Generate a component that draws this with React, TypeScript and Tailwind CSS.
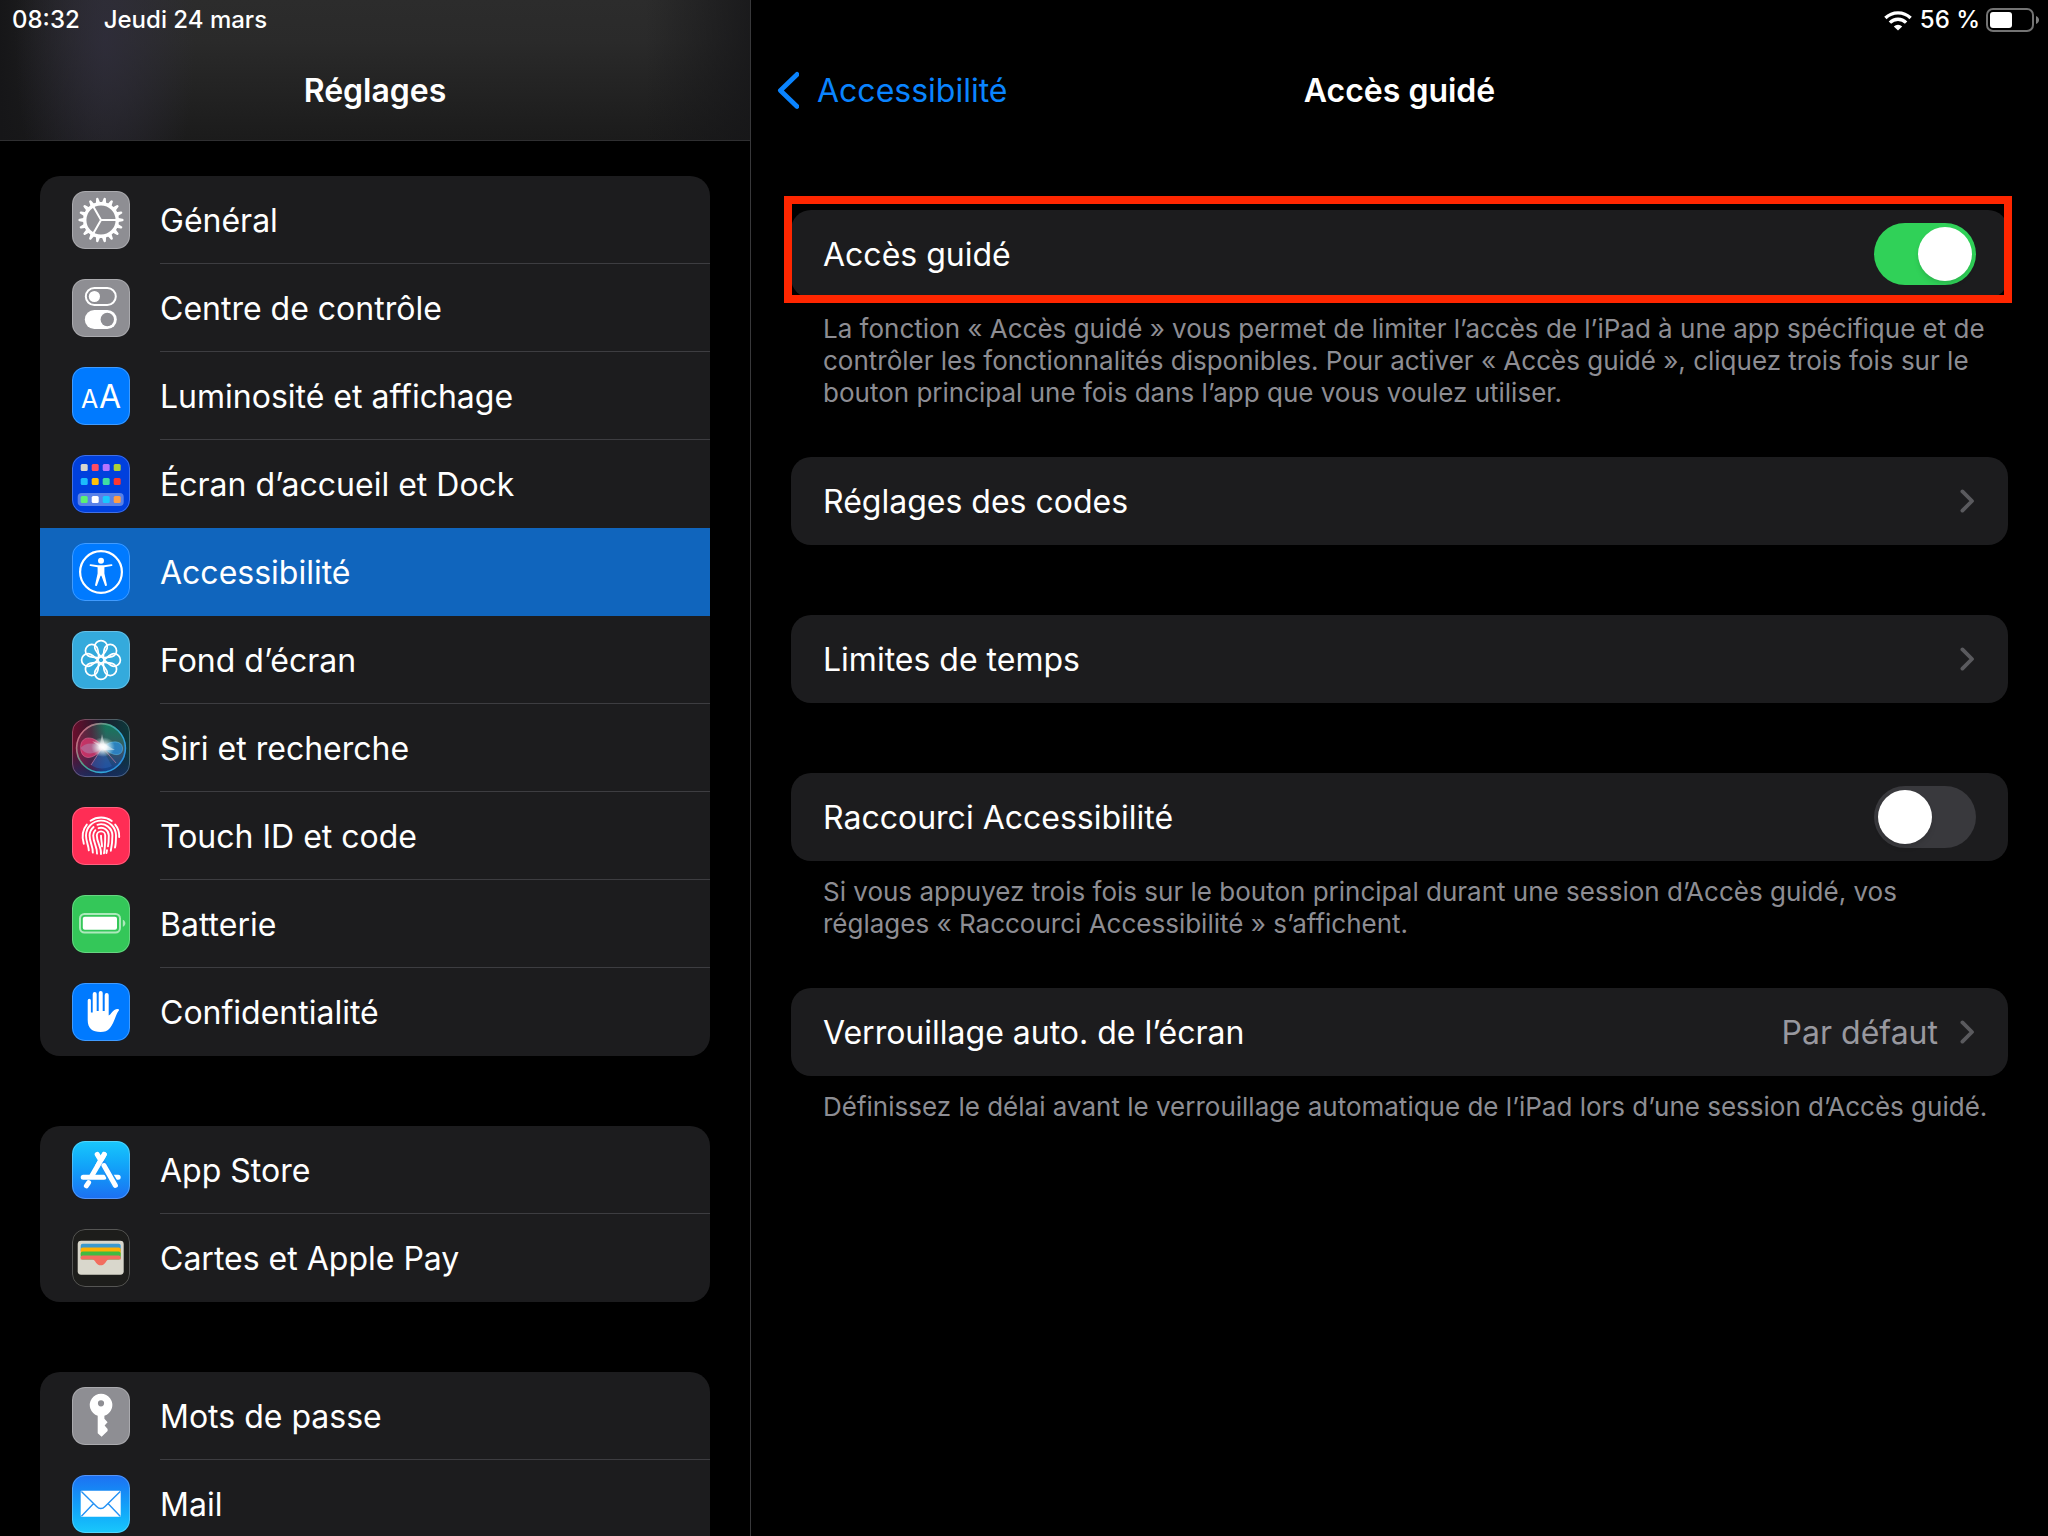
import { useState } from "react";
import type { ReactNode } from "react";

type SidebarItem = {
  label: string;
  icon: ReactNode;
  bg: string;
};

const teeth = Array.from({ length: 18 }, (_, i) => i * 20);
const petals = Array.from({ length: 8 }, (_, i) => i * 45);

const homeApps = [
  ["#d8d6cf", "#ff4d61", "#b574ff", "#acd136"],
  ["#1cbcfc", "#ffc107", "#3fdca3", "#ff3730"],
  ["#5bf173", "#ffffff", "#19c8ff", "#ff9d45"],
];
const homeRows = [9, 23, 41];

function Svg({ children }: { children: ReactNode }) {
  return (
    <svg viewBox="0 0 58 58" className="size-full" aria-hidden="true">
      {children}
    </svg>
  );
}

function GearIcon() {
  return (
    <Svg>
      <g fill="none" stroke="#fff">
        <circle cx="29" cy="29" r="16.3" strokeWidth="3.4" />
        <path
          d="M29 29H45M29 29L21 15.1M29 29L21 42.9"
          strokeWidth="2"
        />
      </g>
      {teeth.map((angle) => (
        <path
          key={angle}
          d="M45.5 26.7L50.4 27.8A1.2 1.2 0 0 1 50.4 30.2L45.5 31.3Z"
          fill="#fff"
          transform={`rotate(${angle} 29 29)`}
        />
      ))}
    </Svg>
  );
}

function ControlIcon() {
  return (
    <Svg>
      <rect x="13.8" y="9" width="30" height="17" rx="8.5" fill="none" stroke="#fff" strokeWidth="2" />
      <circle cx="22.4" cy="17.5" r="5.6" fill="#fff" />
      <rect x="12.8" y="31" width="32" height="19" rx="9.5" fill="#fff" />
      <circle cx="35.3" cy="40.5" r="6.7" fill="#8e8e93" />
    </Svg>
  );
}

function TextSizeIcon() {
  return (
    <Svg>
      <g fill="#fff" fontFamily="Inter, sans-serif" textAnchor="middle">
        <text x="17.5" y="41" fontSize="25">A</text>
        <text x="38" y="41" fontSize="32">A</text>
      </g>
    </Svg>
  );
}

function HomeIcon() {
  return (
    <Svg>
      <rect x="5.7" y="38" width="46" height="13" rx="4" fill="#fff" opacity="0.35" />
      {homeApps.map((row, r) =>
        row.map((color, c) => (
          <rect key={color} x={8.7 + c * 11} y={homeRows[r]} width="7" height="7" rx="1.5" fill={color} />
        ))
      )}
    </Svg>
  );
}

function AccessibilityIcon() {
  return (
    <Svg>
      <circle cx="29" cy="29" r="20.9" fill="none" stroke="#fff" strokeWidth="2.2" />
      <circle cx="29" cy="17.7" r="3" fill="#fff" />
      <path
        d="M18.6 21.2L26 22.2H32L39.4 21.2A.9.9 0 0 1 39.6 23L32.4 24.3V30.5L34.9 41.8A1 1 0 0 1 33 42.4L29.4 32.8H28.6L25 42.4A1 1 0 0 1 23.1 41.8L25.6 30.5V24.3L18.4 23A.9.9 0 0 1 18.6 21.2Z"
        fill="#fff"
      />
    </Svg>
  );
}

function WallpaperIcon() {
  return (
    <Svg>
      <g fill="none" stroke="#fff" strokeWidth="1.7">
        <circle cx="29" cy="29" r="3.2" />
        {petals.map((angle) => (
          <path
            key={angle}
            d="M29 25.8C26 22 22.7 19.6 22.7 15.9A6.3 6.3 0 0 1 35.3 15.9C35.3 19.6 32 22 29 25.8Z"
            transform={`rotate(${angle} 29 29)`}
          />
        ))}
      </g>
    </Svg>
  );
}

function SiriIcon() {
  return (
    <Svg>
      <defs>
        <linearGradient id="siri-bg" x1="0" y1="0" x2="1" y2="0">
          <stop offset="0" stopColor="#6e0d2c" />
          <stop offset="0.5" stopColor="#1d1c2c" />
          <stop offset="1" stopColor="#0b3a3c" />
        </linearGradient>
        <linearGradient id="siri-base" x1="0" y1="0" x2="0" y2="1">
          <stop offset="0.5" stopColor="#12264d" stopOpacity="0" />
          <stop offset="1" stopColor="#17306a" stopOpacity="0.8" />
        </linearGradient>
        <linearGradient id="siri-ring" x1="0" y1="0.2" x2="1" y2="0.8">
          <stop offset="0" stopColor="#e0607f" />
          <stop offset="0.4" stopColor="#4aa58a" />
          <stop offset="0.7" stopColor="#31a9d8" />
          <stop offset="1" stopColor="#2a8ae0" />
        </linearGradient>
        <linearGradient id="siri-orb" x1="0.6" y1="0" x2="0.5" y2="1">
          <stop offset="0" stopColor="#127a5c" />
          <stop offset="0.5" stopColor="#3d5563" />
          <stop offset="1" stopColor="#0d3f92" />
        </linearGradient>
        <linearGradient id="siri-left" x1="0" y1="0" x2="1" y2="0">
          <stop offset="0" stopColor="#8a1740" stopOpacity="0.9" />
          <stop offset="0.3" stopColor="#5a1233" stopOpacity="0.7" />
          <stop offset="0.6" stopColor="#5a1233" stopOpacity="0" />
        </linearGradient>
        <radialGradient id="siri-glow">
          <stop offset="0" stopColor="#fff" />
          <stop offset="0.3" stopColor="#fff" stopOpacity="0.9" />
          <stop offset="1" stopColor="#bff3ea" stopOpacity="0" />
        </radialGradient>
      </defs>
      <rect width="58" height="58" fill="url(#siri-bg)" />
      <rect width="58" height="58" fill="url(#siri-base)" />
      <circle cx="29" cy="29" r="24" fill="url(#siri-orb)" />
      <circle cx="29" cy="29" r="24" fill="url(#siri-left)" />
      <circle cx="29" cy="29" r="24.4" fill="none" stroke="url(#siri-ring)" strokeWidth="1.6" />
      <path d="M31 28C24 17 9 15 8.6 28C8.4 42 22 42 31 28Z" fill="#e33a72" fillOpacity="0.75" stroke="#f58aae" strokeOpacity="0.6" strokeWidth="0.7" />
      <path d="M31 28C20 22 12 25 8.6 29C14 37 23 36 31 28Z" fill="#a98bb5" fillOpacity="0.5" />
      <path d="M31 28C38 21 50 21 50.6 29C50.8 38 40 38 31 28Z" fill="#2a8fdc" fillOpacity="0.75" stroke="#6fd0f2" strokeOpacity="0.6" strokeWidth="0.7" />
      <path d="M30 29L19 46C26 51 34 50 40 47Z" fill="#2b62b8" fillOpacity="0.5" />
      <path d="M31 29L44 44M30 29L19 46" stroke="#c07aa8" strokeWidth="0.9" strokeOpacity="0.8" />
      <ellipse cx="31" cy="28" rx="12" ry="10" fill="url(#siri-glow)" />
      <path d="M30 15L32.5 25L43 31L32 31L20 22L28 25Z" fill="#fff" fillOpacity="0.45" />
    </Svg>
  );
}

function FingerprintIcon() {
  return (
    <Svg>
      <g fill="none" stroke="#fff" strokeWidth="1.9" strokeLinecap="round">
        <path d="M18.6 13.8A18.4 18.4 0 0 1 39.8 13.9" />
        <path d="M14.8 17.6C10.6 22.6 9.6 29.6 11.8 36.8" />
        <path d="M43.2 17.6C46.4 21.4 47.4 25.6 47.2 30" />
        <path d="M16.8 43.4C16.6 38 14 35 14 28.6A15 15 0 0 1 44 28.6C44 33 44 37 43 40.6" />
        <path d="M20.8 45.6C21.2 39.6 17.6 35.6 17.6 28.6A11.4 11.4 0 0 1 21.6 20" />
        <path d="M25.4 17.8A11.4 11.4 0 0 1 40.4 28.6C40.4 34.6 39.8 39.4 38.8 43.8" />
        <path d="M25 46.6C25.4 40 21.2 35.4 21.2 28.6A7.8 7.8 0 0 1 23.4 23.2" />
        <path d="M26.6 21.2A7.8 7.8 0 0 1 36.8 28.6C36.8 32.8 36.6 36.4 36 39.4M35 43.2L34.4 46" />
        <path d="M29 47C29.6 40 24.8 35.6 24.8 28.6A4.2 4.2 0 0 1 33.2 28.6C33.2 35 33 41 32 46.4" />
        <path d="M29 28.6C29 33 30 35.4 30 39.4" />
      </g>
    </Svg>
  );
}

function BatteryIcon() {
  return (
    <Svg>
      <rect x="8" y="19" width="40" height="18.6" rx="4.5" fill="none" stroke="#fff" strokeOpacity="0.6" strokeWidth="2" />
      <rect x="10.8" y="21.8" width="34.2" height="13" rx="2" fill="#fff" />
      <path d="M50.8 24.8C54.2 26 54.2 30.6 50.8 31.8Z" fill="#fff" fillOpacity="0.6" />
    </Svg>
  );
}

function HandIcon() {
  return (
    <Svg>
      <path
        d="M15.7 17.4A1.6 1.6 0 0 1 18.9 17.4V29.5H20.7V11A2 2 0 0 1 24.7 11V28H26.7V10A2 2 0 0 1 30.7 10V28H32.7V12A2 2 0 0 1 36.7 12V32.5C38.8 31.5 40.3 28.3 42.4 27C44 26 46.4 25.6 47 26.6C47.4 27.3 46.2 27.8 45.2 30C42.6 35.8 41 41.5 38 45C35.4 48 32.5 49 28.6 49C20.5 49 15.7 45.5 15.7 37Z"
        fill="#fff"
      />
    </Svg>
  );
}

function AppStoreIcon() {
  return (
    <Svg>
      <g stroke="#fff" strokeWidth="5" strokeLinecap="round" fill="none">
        <path d="M32.2 13.4L20 34.6M25.2 13.4L29 19.6M16.6 41.6L14.4 44.8" />
        <path d="M11.2 36.2H32M42 36.2H46.2" />
      </g>
      <path d="M29.5 21L43.6 44.6" stroke="#1b93f8" strokeWidth="8" />
      <g stroke="#fff" strokeWidth="5" strokeLinecap="round">
        <path d="M32 24.5L43.4 44.4" />
        <path d="M32.2 13.4L26 24.2" />
      </g>
    </Svg>
  );
}

function WalletIcon() {
  return (
    <Svg>
      <rect x="5.7" y="11.7" width="46" height="34" rx="3.4" fill="#d9d7cc" />
      <rect x="8.7" y="14.7" width="40" height="9" rx="2" fill="#3b99ce" />
      <rect x="8.7" y="18.6" width="40" height="9" rx="2" fill="#ffb003" />
      <rect x="8.7" y="22.6" width="40" height="8" rx="2" fill="#40bb41" />
      <path
        d="M8.7 30.6V28.6A2 2 0 0 1 10.7 26.6H46.7A2 2 0 0 1 48.7 28.6V30.6H38C35 30.6 34.6 32 33.4 33.8C31 37.2 26.4 37.2 24 33.8C22.8 32 22.4 30.6 19.4 30.6Z"
        fill="#f26d5f"
      />
    </Svg>
  );
}

function KeyIcon() {
  return (
    <Svg>
      <path
        fillRule="evenodd"
        d="M25.7 28.8A11.3 11.3 0 1 1 32.4 28.8V31.8L35.6 35.2L32.6 38.6L35.6 42L35.6 44L29.6 49.8L25.7 46.2ZM29 13.2A3.1 3.1 0 1 0 29 19.4A3.1 3.1 0 1 0 29 13.2Z"
        fill="#fff"
      />
    </Svg>
  );
}

function MailIcon() {
  return (
    <Svg>
      <rect x="8.7" y="15.7" width="40" height="26" rx="1" fill="#fff" />
      <path
        d="M9.4 16.4L24.6 31.4C27.2 34.2 30.4 34.2 33 31.4L48.2 16.4M9.4 41.2L21.6 28.6M48.2 41.2L36 28.6"
        fill="none"
        stroke="#2492f5"
        strokeWidth="1.4"
      />
    </Svg>
  );
}

const groups: SidebarItem[][] = [
  [
    { label: "Général", icon: <GearIcon />, bg: "bg-[#8e8e93]" },
    { label: "Centre de contrôle", icon: <ControlIcon />, bg: "bg-[#8e8e93]" },
    { label: "Luminosité et affichage", icon: <TextSizeIcon />, bg: "bg-[#007aff]" },
    { label: "Écran d’accueil et Dock", icon: <HomeIcon />, bg: "bg-[#0040dd]" },
    { label: "Accessibilité", icon: <AccessibilityIcon />, bg: "bg-[#007aff]" },
    { label: "Fond d’écran", icon: <WallpaperIcon />, bg: "bg-[#34aadc]" },
    { label: "Siri et recherche", icon: <SiriIcon />, bg: "bg-[#1d1c2c]" },
    { label: "Touch ID et code", icon: <FingerprintIcon />, bg: "bg-[#ff2d55]" },
    { label: "Batterie", icon: <BatteryIcon />, bg: "bg-[#34c759]" },
    { label: "Confidentialité", icon: <HandIcon />, bg: "bg-[#007aff]" },
  ],
  [
    {
      label: "App Store",
      icon: <AppStoreIcon />,
      bg: "bg-linear-to-b from-[#1ac8fc] to-[#1d6ff2]",
    },
    { label: "Cartes et Apple Pay", icon: <WalletIcon />, bg: "bg-[#1d1d1b]" },
  ],
  [
    { label: "Mots de passe", icon: <KeyIcon />, bg: "bg-[#8e8e93]" },
    {
      label: "Mail",
      icon: <MailIcon />,
      bg: "bg-linear-to-b from-[#1d6ff2] to-[#1ac8fc]",
    },
  ],
];

function SidebarGroup({
  items,
  selected,
  onSelect,
}: {
  items: SidebarItem[];
  selected: string;
  onSelect: (label: string) => void;
}) {
  return (
    <ul className="shrink-0 overflow-hidden rounded-[20px] bg-[#1c1c1e] last:rounded-b-none">
      {items.map((item, i) => {
        const active = item.label === selected;
        const last = i === items.length - 1;
        const noLine = active || last || items[i + 1].label === selected;
        return (
          <li key={item.label}>
            <button
              type="button"
              onClick={() => onSelect(item.label)}
              className={`flex h-22 w-full items-center gap-[30px] pl-8 text-left text-[32px] ${
                active ? "bg-[#1065bd]" : ""
              }`}
            >
              <span
                className={`relative flex size-[58px] shrink-0 items-center justify-center overflow-hidden rounded-[13px] ${item.bg}`}
              >
                {item.icon}
                <span className="absolute inset-0 rounded-[13px] border border-white/25" />
              </span>
              <span
                className={`flex h-full flex-1 items-center border-b pt-0.5 ${
                  noLine ? "border-transparent" : "border-[#3d3d41]"
                }`}
              >
                {item.label}
              </span>
            </button>
          </li>
        );
      })}
    </ul>
  );
}

function Chevron() {
  return (
    <svg viewBox="0 0 16 26" className="h-[26px] w-4" aria-hidden="true">
      <path
        d="M2.4 3.4L12 13L2.4 22.6"
        fill="none"
        stroke="#5a5a5e"
        strokeWidth="3.8"
        strokeLinecap="round"
        strokeLinejoin="round"
      />
    </svg>
  );
}

function LinkRow({ label, value }: { label: string; value?: string }) {
  return (
    <a
      href="#"
      className="flex h-22 items-center rounded-[20px] bg-[#1c1c1e] px-8 text-[32px]"
    >
      <span className="flex-1 pt-0.5">{label}</span>
      {value && <span className="mr-[22px] pt-0.5 text-[#98989f]">{value}</span>}
      <Chevron />
    </a>
  );
}

function SwitchRow({
  label,
  checked,
  onChange,
}: {
  label: string;
  checked: boolean;
  onChange: (value: boolean) => void;
}) {
  return (
    <label className="flex h-22 items-center justify-between rounded-[20px] bg-[#1c1c1e] px-8 text-[32px]">
      <span className="pt-0.5">{label}</span>
      <input
        type="checkbox"
        role="switch"
        checked={checked}
        onChange={(e) => onChange(e.target.checked)}
        className="flex h-[62px] w-[102px] appearance-none items-center rounded-full bg-[#39393d] px-1 before:size-[54px] before:rounded-full before:bg-white before:shadow-md checked:justify-end checked:bg-[#30d158]"
      />
    </label>
  );
}

function Note({ children }: { children: ReactNode }) {
  return (
    <p className="pt-[15px] pr-4 pl-8 text-[26px] leading-8 text-[#8d8d93]">
      {children}
    </p>
  );
}

function StatusIcons() {
  return (
    <>
      <svg viewBox="0 0 28 21" className="h-[21px] w-7" aria-hidden="true">
        <g fill="none" stroke="#fff" strokeWidth="3.4">
          <path d="M1.4 8A18 18 0 0 1 26.6 8" />
          <path d="M5.9 12.6A11.6 11.6 0 0 1 22.1 12.6" />
        </g>
        <path d="M14 20.6L9.8 16.4A6 6 0 0 1 18.2 16.4Z" fill="#fff" />
      </svg>
      <span className="mr-1.5 ml-2">56 %</span>
      <svg viewBox="0 0 54 24" className="h-6 w-[54px]" aria-hidden="true">
        <rect x="1" y="1" width="46" height="22" rx="6" fill="none" stroke="#fff" strokeOpacity="0.45" strokeWidth="2" />
        <rect x="4" y="4" width="22" height="16" rx="3" fill="#fff" />
        <path d="M50 8C54 9.4 54 14.6 50 16Z" fill="#fff" fillOpacity="0.5" />
      </svg>
    </>
  );
}

function App() {
  const [selected, setSelected] = useState("Accessibilité");
  const [guided, setGuided] = useState(true);
  const [shortcut, setShortcut] = useState(false);

  return (
    <div className="flex h-screen overflow-hidden bg-black font-[Inter,sans-serif] text-white">
      <aside className="flex w-[751px] shrink-0 flex-col border-r border-[#38383a]">
        <header className="shrink-0 border-b border-[#2f2f31] bg-[radial-gradient(ellipse_90px_220px_at_105px_40px,#2f2d3ccc,#2f2d3c00),linear-gradient(to_right,#161618,#16161800_14%,#16161800_86%,#161618cc),linear-gradient(#2c2c2c,#2a2a2a_30%,#1b1b1b)]">
          <div className="flex h-10 items-center gap-6 px-3 text-2xl font-medium">
            <span>08:32</span>
            <span>Jeudi 24 mars</span>
          </div>
          <h1 className="flex h-25 items-center justify-center pt-0.5 text-[32px] font-semibold">
            Réglages
          </h1>
        </header>
        <nav className="flex min-h-0 flex-1 flex-col gap-[70px] overflow-y-auto px-10 pt-[35px] [scrollbar-width:none]">
          {groups.map((items) => (
            <SidebarGroup
              key={items[0].label}
              items={items}
              selected={selected}
              onSelect={setSelected}
            />
          ))}
        </nav>
      </aside>

      <main className="min-w-0 flex-1">
        <header>
          <div className="flex h-10 items-center justify-end px-2 text-2xl font-medium">
            <StatusIcons />
          </div>
          <div className="grid h-25 grid-cols-[1fr_auto_1fr] items-center px-6 pt-0.5 text-[32px]">
            <a href="#" className="flex items-center gap-[18px] text-[#0a84ff]">
              <svg viewBox="0 0 24 40" className="h-10 w-6" aria-hidden="true">
                <path
                  d="M22 3.4L5.4 19.4L22 35.4"
                  fill="none"
                  stroke="currentColor"
                  strokeWidth="4.8"
                  strokeLinecap="round"
                  strokeLinejoin="round"
                />
              </svg>
              Accessibilité
            </a>
            <h2 className="font-semibold">Accès guidé</h2>
          </div>
        </header>

        <div className="flex flex-col px-10 pt-[70px]">
          <section>
            <div className="relative">
              <SwitchRow label="Accès guidé" checked={guided} onChange={setGuided} />
              <div className="pointer-events-none absolute -top-3.5 -right-1 -bottom-[5px] -left-[7px] border-8 border-[#ff2600]" />
            </div>
            <Note>
              La fonction « Accès guidé » vous permet de limiter l’accès de
              l’iPad à une app spécifique et de contrôler les fonctionnalités
              disponibles. Pour activer « Accès guidé », cliquez trois fois sur
              le bouton principal une fois dans l’app que vous voulez utiliser.
            </Note>
          </section>
          <section className="mt-12 flex flex-col gap-[70px]">
            <LinkRow label="Réglages des codes" />
            <LinkRow label="Limites de temps" />
            <div>
              <SwitchRow
                label="Raccourci Accessibilité"
                checked={shortcut}
                onChange={setShortcut}
              />
              <Note>
                Si vous appuyez trois fois sur le bouton principal durant une
                session d’Accès guidé, vos réglages « Raccourci Accessibilité »
                s’affichent.
              </Note>
            </div>
          </section>
          <section className="mt-12">
            <LinkRow label="Verrouillage auto. de l’écran" value="Par défaut" />
            <Note>
              Définissez le délai avant le verrouillage automatique de l’iPad
              lors d’une session d’Accès guidé.
            </Note>
          </section>
        </div>
      </main>
    </div>
  );
}

export default App;
